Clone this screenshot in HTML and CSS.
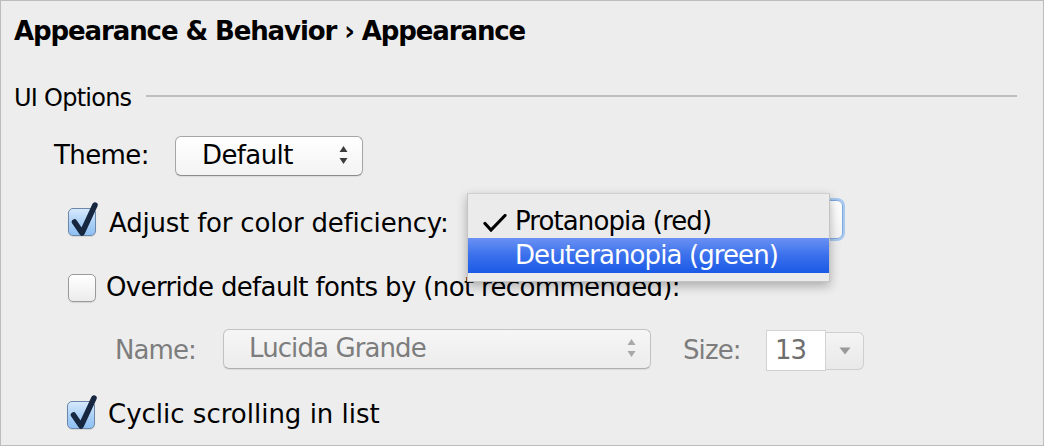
FILE: index.html
```html
<!DOCTYPE html>
<html>
<head>
<meta charset="utf-8">
<link rel="stylesheet" href="styles.css">
</head>
<body>
<div class="window">
  <h1 class="crumb">Appearance &amp; Behavior › Appearance</h1>

  <div class="group-title"><span class="group-name">UI Options</span><span class="rule"></span></div>

  <div class="row row-theme">
    <span class="label label-theme">Theme:</span>
    <div class="combo combo-theme">
      <span class="combo-text">Default</span>
      <svg class="updown" width="9" height="20" viewBox="0 0 9 20"><path d="M4.5 0 L8.5 6 L0.5 6 Z" fill="#3c3c3c"/><path d="M0.5 12 L8.5 12 L4.5 18 Z" fill="#3c3c3c"/></svg>
    </div>
  </div>

  <div class="row row-adjust">
    <span class="check checked">
      <svg width="34" height="44" viewBox="0 0 34 44"><path d="M7.5 25 L15 36 L28 8" fill="none" stroke="#172740" stroke-width="5.5" stroke-linecap="round" stroke-linejoin="round"/></svg>
    </span>
    <span class="check-label label-adjust">Adjust for color deficiency:</span>
    <div class="combo combo-focus"></div>
  </div>

  <div class="row row-override">
    <span class="check"></span>
    <span class="check-label label-override">Override default fonts by (not recommended):</span>
  </div>

  <div class="row row-font">
    <span class="label dim label-name">Name:</span>
    <div class="combo combo-disabled">
      <span class="combo-text dim">Lucida Grande</span>
      <svg class="updown" width="9" height="20" viewBox="0 0 9 20"><path d="M4.5 0 L8.5 6 L0.5 6 Z" fill="#a8a8a8"/><path d="M0.5 12 L8.5 12 L4.5 18 Z" fill="#a8a8a8"/></svg>
    </div>
    <span class="label dim label-size">Size:</span>
    <div class="field">13</div>
    <div class="arrowbtn"><svg width="12" height="8" viewBox="0 0 12 8"><path d="M0.5 0.5 L11.5 0.5 L6 7.5 Z" fill="#9a9a9a"/></svg></div>
  </div>

  <div class="row row-cyclic">
    <span class="check checked">
      <svg width="34" height="44" viewBox="0 0 34 44"><path d="M7.5 25 L15 36 L28 8" fill="none" stroke="#172740" stroke-width="5.5" stroke-linecap="round" stroke-linejoin="round"/></svg>
    </span>
    <span class="check-label label-cyclic">Cyclic scrolling in list</span>
  </div>

  <div class="popup">
    <div class="item"><svg class="tick" width="24" height="18" viewBox="0 0 24 18"><path d="M2 9.5 L8 16 L22 1.5" fill="none" stroke="#000" stroke-width="3.2" stroke-linecap="round" stroke-linejoin="miter"/></svg>Protanopia (red)</div>
    <div class="item selected">Deuteranopia (green)</div>
  </div>
</div>
</body>
</html>
```

FILE: styles.css
```css
* { box-sizing: border-box; }

html, body {
  margin: 0;
  padding: 0;
  background: #ededed;
}

.window {
  position: relative;
  width: 1044px;
  height: 446px;
  border: 1px solid #bdbdbd;
  background: #ededed;
  font-family: "DejaVu Sans", "Liberation Sans", sans-serif;
  font-size: 26px;
  line-height: 30px;
  color: #000;
  overflow: hidden;
}

.crumb {
  margin: 0;
  padding: 15px 0 0 13px;
  font-size: 26px;
  font-weight: 700;
  line-height: 30px;
  letter-spacing: -1.1px;
}

.group-title {
  display: flex;
  align-items: flex-start;
  height: 30px;
  margin-top: 36px;
  padding-left: 13px;
  padding-right: 26px;
}

.group-name {
  font-size: 24px;
  letter-spacing: -0.75px;
  margin-top: 1px;
}

.rule {
  flex: 1;
  height: 2px;
  margin-top: 13px;
  margin-left: 15px;
  background: #bebebe;
}

.row {
  display: flex;
  align-items: flex-start;
}

.label, .check-label {
  letter-spacing: -0.6px;
  white-space: nowrap;
}

.dim { color: #7d7d7d; }

/* Theme row */
.row-theme {
  height: 40px;
  margin-top: 24px;
  padding-left: 53px;
}

.label-theme {
  width: 121px;
  margin-top: 4px;
}

.combo {
  position: relative;
  display: flex;
  align-items: flex-start;
  height: 40px;
  border: 1px solid #a6a6a6;
  border-bottom-color: #8c8c8c;
  border-radius: 6px;
  background: linear-gradient(#ffffff, #f3f3f3);
  box-shadow: 0 1px 1px rgba(0,0,0,0.08);
}

.combo-theme {
  width: 188px;
  padding-left: 26px;
}

.combo-text {
  margin-top: 3px;
  letter-spacing: -0.6px;
  white-space: nowrap;
}

.updown {
  position: absolute;
  right: 14px;
  top: 9px;
}

/* Adjust row */
.row-adjust {
  height: 39px;
  margin-top: 24px;
  padding-left: 67px;
}

.check {
  position: relative;
  flex: none;
  width: 28px;
  height: 28px;
  margin-top: 8px;
  border: 1px solid #9a9a9a;
  border-radius: 5px;
  background: linear-gradient(#ffffff, #ececec);
  box-shadow: 0 1px 1px rgba(0,0,0,0.1);
}

.check.checked {
  border-color: #6b87a9;
  background: linear-gradient(#d7e9fc, #a9cff6 55%, #8fc0f3);
}

.check svg {
  position: absolute;
  left: -2px;
  top: -12px;
}

.check-label {
  margin-left: 13px;
}

.label-adjust {
  margin-top: 8px;
  letter-spacing: -0.2px;
}

.combo-focus {
  width: 370px;
  height: 39px;
  margin-left: auto;
  margin-right: 200px;
  border: 1px solid #7fa9de;
  box-shadow: 0 0 0 2px #a7c8ef;
}

/* Override row */
.row-override {
  height: 30px;
  margin-top: 33px;
  padding-left: 67px;
}

.row-override .check { margin-top: 2px; }

.label-override {
  margin-left: 10px;
  letter-spacing: -0.65px;
}

/* Font row */
.row-font {
  height: 42px;
  margin-top: 27px;
  padding-left: 114px;
}

.label-name {
  width: 108px;
  margin-top: 6px;
  letter-spacing: -0.9px;
}

.combo-disabled {
  width: 428px;
  height: 40px;
  padding-left: 25px;
  border-color: #c2c2c2;
  border-bottom-color: #b0b0b0;
  background: linear-gradient(#f6f6f6, #ececec);
}

.combo-disabled .combo-text { letter-spacing: -0.9px; }

.label-size {
  width: 83px;
  margin-left: 32px;
  margin-top: 6px;
  letter-spacing: -0.9px;
}

.field {
  width: 60px;
  height: 41px;
  margin-top: 1px;
  padding-left: 8px;
  border: 1px solid #d2d2d2;
  background: #ffffff;
  color: #6e6e6e;
  line-height: 38px;
  letter-spacing: -1px;
}

.arrowbtn {
  display: flex;
  align-items: center;
  justify-content: center;
  width: 38px;
  height: 38px;
  margin-top: 3px;
  border: 1px solid #cfcfcf;
  border-left: none;
  border-radius: 0 6px 6px 0;
  background: linear-gradient(#f4f4f4, #e9e9e9);
}

/* Cyclic row */
.row-cyclic {
  height: 30px;
  margin-top: 28px;
  padding-left: 66px;
}

.row-cyclic .check { margin-top: 2px; }

.label-cyclic {
  margin-left: 13px;
  letter-spacing: 0;
}

/* Popup menu */
.popup {
  position: absolute;
  left: 466px;
  top: 192px;
  width: 363px;
  padding: 10px 0 8px;
  border: 1px solid #c4c4c4;
  border-top-color: #d0d0d0;
  background: #ebebeb;
  box-shadow: 0 4px 10px rgba(0,0,0,0.28);
}

.item {
  position: relative;
  height: 34px;
  line-height: 34px;
  padding-left: 47px;
  letter-spacing: -0.9px;
  white-space: nowrap;
}

.item.selected {
  height: 35px;
  line-height: 35px;
  color: #ffffff;
  background: linear-gradient(#6a91f3, #3a70ec 50%, #1b5ae6);
}

.tick {
  position: absolute;
  left: 15px;
  top: 10px;
}
```
